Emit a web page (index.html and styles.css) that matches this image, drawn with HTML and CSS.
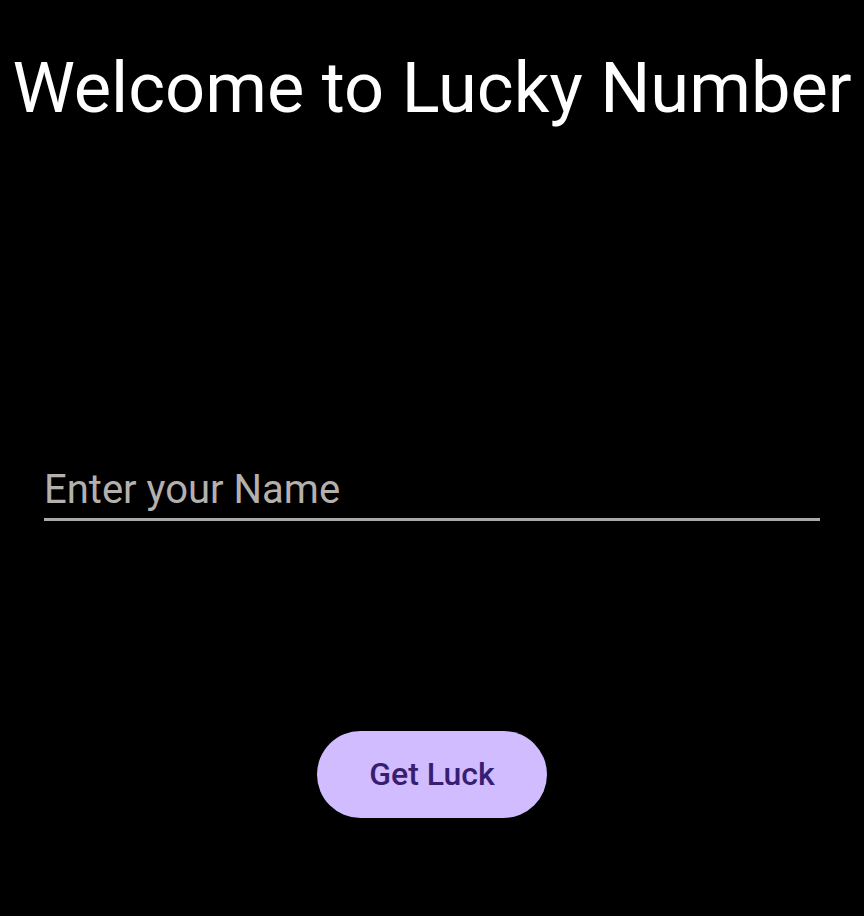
FILE: index.html
```html
<!DOCTYPE html>
<html>
<head>
<meta charset="utf-8">
<link rel="stylesheet" href="styles.css">
</head>
<body>
<div class="screen">
  <h1 class="title">Welcome to Lucky Number</h1>
  <div class="field">
    <span class="placeholder">Enter your Name</span>
  </div>
  <div class="actions">
    <button class="btn">Get Luck</button>
  </div>
</div>
</body>
</html>
```
FILE: styles.css
```css
html, body {
  margin: 0;
  padding: 0;
  background: #000;
}
.screen {
  width: 864px;
  height: 916px;
  background: #000;
  font-family: Roboto, "Noto Sans", sans-serif;
  display: flex;
  flex-direction: column;
}
.title {
  margin: 0;
  padding-top: 46px;
  text-align: center;
  color: #fff;
  font-weight: 400;
  font-size: 70.4px;
  line-height: 84px;
}
.field {
  margin: 337px 44px 0 44px;
  border-bottom: 3px solid #a9a9a9;
  padding-bottom: 5px;
}
.placeholder {
  color: #b4b0ae;
  font-size: 40px;
  line-height: 46px;
  display: block;
  padding-left: 0;
}
.actions {
  display: flex;
  justify-content: center;
  margin-top: 210px;
}
.btn {
  width: 230px;
  height: 87px;
  border: none;
  border-radius: 44px;
  background: #d0bcff;
  color: #381e72;
  font-family: Roboto, sans-serif;
  font-weight: 500;
  font-size: 32px;
  padding: 0 0 2px 0;
}
```
